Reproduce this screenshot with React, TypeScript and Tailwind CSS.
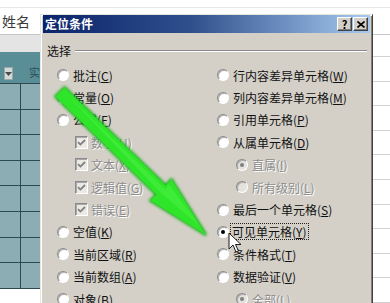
import React from "react";

type Kind = "radio" | "check" | "sub";

type Item = {
  kind: Kind;
  label: string;
  hot: string;
  checked?: boolean;
  disabled?: boolean;
  focus?: boolean;
};

const leftItems: Item[] = [
  { kind: "radio", label: "批注", hot: "C" },
  { kind: "radio", label: "常量", hot: "O" },
  { kind: "radio", label: "公式", hot: "F" },
  { kind: "check", label: "数字", hot: "U", checked: true, disabled: true },
  { kind: "check", label: "文本", hot: "X", checked: true, disabled: true },
  { kind: "check", label: "逻辑值", hot: "G", checked: true, disabled: true },
  { kind: "check", label: "错误", hot: "E", checked: true, disabled: true },
  { kind: "radio", label: "空值", hot: "K" },
  { kind: "radio", label: "当前区域", hot: "R" },
  { kind: "radio", label: "当前数组", hot: "A" },
  { kind: "radio", label: "对象", hot: "B" },
];

const rightItems: Item[] = [
  { kind: "radio", label: "行内容差异单元格", hot: "W" },
  { kind: "radio", label: "列内容差异单元格", hot: "M" },
  { kind: "radio", label: "引用单元格", hot: "P" },
  { kind: "radio", label: "从属单元格", hot: "D" },
  { kind: "sub", label: "直属", hot: "I", checked: true, disabled: true },
  { kind: "sub", label: "所有级别", hot: "L", disabled: true },
  { kind: "radio", label: "最后一个单元格", hot: "S" },
  { kind: "radio", label: "可见单元格", hot: "Y", checked: true, focus: true },
  { kind: "radio", label: "条件格式", hot: "T" },
  { kind: "radio", label: "数据验证", hot: "V" },
  { kind: "sub", label: "全部", hot: "L", checked: true, disabled: true },
];

function Radio({ checked, disabled }: { checked?: boolean; disabled?: boolean }) {
  return (
    <span
      className={`flex h-[12px] w-[12px] shrink-0 items-center justify-center rounded-full border border-t-[#8a8a8a] border-l-[#8a8a8a] border-r-white border-b-white shadow-[inset_1px_1px_0_#b0b0b0] ${
        disabled ? "bg-[#e4e2dd]" : "bg-white"
      }`}
    >
      {checked && (
        <span
          className={`h-[4px] w-[4px] rounded-full ${disabled ? "bg-[#808080]" : "bg-black"}`}
        />
      )}
    </span>
  );
}

function Check({ checked, disabled }: { checked?: boolean; disabled?: boolean }) {
  return (
    <span
      className={`flex h-[13px] w-[13px] shrink-0 items-center justify-center border border-t-[#8a8a8a] border-l-[#8a8a8a] border-r-white border-b-white shadow-[inset_1px_1px_0_#a8a8a8] ${
        disabled ? "bg-[#ebe9e4]" : "bg-white"
      }`}
    >
      {checked && (
        <svg width="9" height="9" viewBox="0 0 9 9">
          <path
            d="M1 4.2 L3.4 6.6 L8 2"
            fill="none"
            stroke={disabled ? "#808080" : "#000"}
            strokeWidth="1.8"
          />
        </svg>
      )}
    </span>
  );
}

function Row({ item }: { item: Item }) {
  const text = (
    <span
      className={`whitespace-nowrap leading-[15px] ${
        item.disabled
          ? "text-[#8c8c8c] [text-shadow:1px_1px_0_#ffffff]"
          : "text-[#111111]"
      } ${item.focus ? "border border-dotted border-[#222] px-[1px]" : ""}`}
    >
      {item.label}(<u className="underline-offset-[1px]">{item.hot}</u>)
    </span>
  );

  return (
    <div className="flex h-[22.4px] items-center">
      {item.kind === "check" ? (
        <span className="ml-[18px] mr-[3px] flex">
          <Check checked={item.checked} disabled={item.disabled} />
        </span>
      ) : (
        <span
          className={`flex ${item.kind === "sub" ? "ml-[19px]" : ""} ${
            item.focus ? "mr-[1px]" : "mr-[4px]"
          }`}
        >
          <Radio checked={item.checked} disabled={item.disabled} />
        </span>
      )}
      {text}
    </div>
  );
}

function TitleButton({ children }: { children: React.ReactNode }) {
  return (
    <span className="flex h-[14px] w-[15px] items-center justify-center border border-t-white border-l-white border-r-[#404040] border-b-[#404040] bg-[#d4d0c8] text-[11px] font-bold leading-none text-black shadow-[inset_-1px_-1px_0_#808080]">
      {children}
    </span>
  );
}

const cellRows = [0, 1, 2, 3, 4, 5, 6, 7];
const rightRows = [0, 1, 2, 3, 4, 5, 6, 7, 8, 9];

export default function App() {
  return (
    <div className="relative h-[303px] w-[390px] overflow-hidden bg-white font-['Noto_Sans_CJK_SC','Liberation_Sans',sans-serif]">
      {/* sheet behind the dialog */}
      <div className="h-[7px]" />
      <div className="h-px bg-[#e6e6e6]" />
      <div className="flex h-[26px] items-center pl-[2px] text-[14px] text-[#3a3a3a]">
        姓名
      </div>
      <div className="h-px bg-[#c6c6c6]" />
      <div className="flex h-[268px]">
        <div className="flex w-[40px] flex-col">
          <div className="h-[17px] bg-[#e4e4e4]" />
          <div className="flex h-[31px] items-end bg-[#5a8e97] pb-[3px] pl-[4px]">
            <span className="flex h-[13px] w-[13px] items-center justify-center border border-[#9aa6a8] bg-[#d3d8d8]">
              <svg width="7" height="4" viewBox="0 0 7 4">
                <path d="M0 0 L7 0 L3.5 4 Z" fill="#4a4a4a" />
              </svg>
            </span>
            <span className="ml-[16px] mb-[2px] text-[11px] leading-none text-[#2c5057]">实</span>
          </div>
          <div className="h-px bg-[#2c4a50]" />
          {cellRows.map((r) => (
            <div key={r} className="flex h-[25.6px] border-b border-[#2c4a50] bg-[#8badb3]">
              <div className="w-[21px] border-r border-[#2c4a50]" />
              <div className="flex-1" />
            </div>
          ))}
        </div>
        <div className="w-[333px]" />
        <div className="flex flex-1 flex-col">
          <div className="h-[23px] border-b border-[#d2d2d2]" />
          {rightRows.map((r) => (
            <div key={r} className="h-[25.6px] border-b border-[#d2d2d2]" />
          ))}
        </div>
      </div>

      {/* dialog window */}
      <div className="absolute left-[40px] top-[14px] flex h-[300px] w-[333px] flex-col border border-t-[#e6e4de] border-l-[#e6e4de] border-r-[#404040] border-b-[#404040] bg-[#d4d0c8] shadow-[inset_1px_1px_0_#ffffff,inset_-1px_-1px_0_#808080]">
        <div className="mx-[2px] flex h-[18px] items-center bg-[linear-gradient(to_right,#0a246a,#2f4f8c_45%,#a6caf0)] pl-[2px] pr-[2px]">
          <span className="text-[12px] font-bold leading-none text-white">定位条件</span>
          <span className="ml-auto flex gap-[1px]">
            <TitleButton>?</TitleButton>
            <TitleButton>
              <svg width="8" height="7" viewBox="0 0 8 7">
                <path d="M0.5 0.5 L7.5 6.5 M7.5 0.5 L0.5 6.5" stroke="#000" strokeWidth="1.6" />
              </svg>
            </TitleButton>
          </span>
        </div>

        <div className="mt-[11px] flex h-[14px] items-center pl-[6px] pr-[5px]">
          <span className="text-[12px] leading-none text-[#111111]">选择</span>
          <span className="ml-[4px] h-[2px] flex-1 border-t border-b border-t-[#8a8a8a] border-b-white" />
        </div>

        <div className="mt-[6px] flex text-[12px]">
          <div className="flex w-[176px] flex-col pl-[16px]">
            {leftItems.map((it) => (
              <Row key={it.label} item={it} />
            ))}
          </div>
          <div className="flex flex-1 flex-col">
            {rightItems.map((it) => (
              <Row key={it.label} item={it} />
            ))}
          </div>
        </div>
      </div>

      {/* green arrow overlay */}
      <svg className="pointer-events-none absolute inset-0" width="390" height="303" viewBox="0 0 390 303">
        <defs>
          <filter id="glow" x="-20%" y="-20%" width="140%" height="140%">
            <feGaussianBlur stdDeviation="1.8" />
          </filter>
        </defs>
        <polygon
          points="64.6,87.4 165.6,185.4 171.6,179.4 206,235 150.4,200.6 156.4,194.6 55.4,96.6"
          fill="#12b012"
          filter="url(#glow)"
          stroke="#12b012"
          strokeWidth="2.5"
        />
        <polygon
          points="64.6,87.4 165.6,185.4 171.6,179.4 206,235 150.4,200.6 156.4,194.6 55.4,96.6"
          fill="#2fe52a"
        />
        <polygon
          points="63,90.5 165,189 169,185 200,226 161,193"
          fill="#55f84c"
          opacity="0.4"
        />
        {/* mouse pointer */}
        <path
          d="M229 233 L229 249 L233 245 L236 252 L238.5 251 L235.5 244.5 L241 244.5 Z"
          fill="#ffffff"
          stroke="#1a1a1a"
          strokeWidth="1"
          strokeLinejoin="round"
        />
      </svg>
    </div>
  );
}
